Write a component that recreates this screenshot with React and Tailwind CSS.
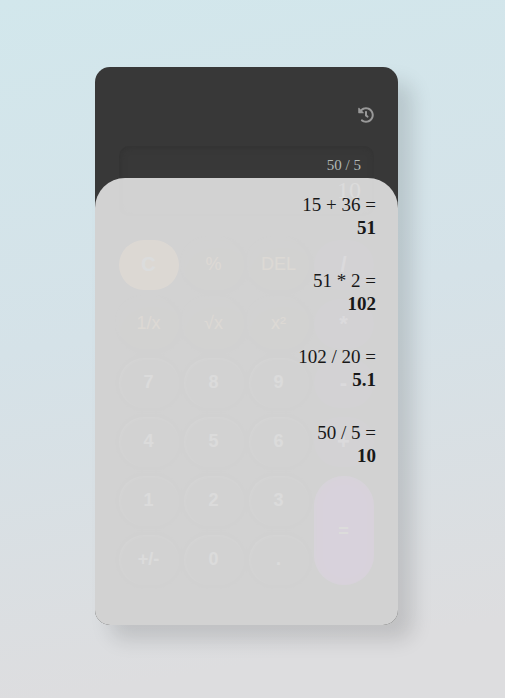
import { FaHistory } from "react-icons/fa";

const tones = {
  clear: "pb-0.5 bg-[#ffb058] text-[#e0f8ff] font-bold text-[20px]",
  fn: "pb-0.5 bg-[#40402c] text-[#ffb868] text-[18px] shadow-[inset_4px_12px_5px_#383838,1px_1px_5px_#282828,-1px_-1px_3px_#4c4c4c]",
  op: "bg-[#4c4064] text-[#e8d0ff] font-bold text-[22px]",
  num: "pb-0.5 bg-[#404040] text-[#e4e4e4] font-bold text-[18px] shadow-[inset_1px_1px_3px_#707070,0_0_4px_#282828]",
  equals: "row-span-2 bg-[#a83cf0] text-[#ffffdd] font-bold text-[18px] shadow-[inset_1px_1px_8px_#a060b0]",
};

const keys = [
  ["C", "clear"], ["%", "fn"], ["DEL", "fn"], ["/", "op"],
  ["1/x", "fn"], ["√x", "fn"], ["x²", "fn"], ["*", "op"],
  ["7", "num"], ["8", "num"], ["9", "num"], ["-", "op"],
  ["4", "num"], ["5", "num"], ["6", "num"], ["+", "op"],
  ["1", "num"], ["2", "num"], ["3", "num"], ["=", "equals"],
  ["+/-", "num"], ["0", "num"], [".", "num"],
];

const history = [
  ["15 + 36", "51"],
  ["51 * 2", "102"],
  ["102 / 20", "5.1"],
  ["50 / 5", "10"],
];

function Key({ label, tone }) {
  return (
    <button className={`flex items-center justify-center rounded-[30px] pr-px leading-none ${tones[tone]}`}>
      {label}
    </button>
  );
}

function HistoryPanel() {
  return (
    <div className="absolute inset-x-0 bottom-0 h-[447px] rounded-t-[30px] rounded-b-[15px] bg-[#dadadaf2] pt-4 pr-[22px] text-right font-['Liberation_Serif',serif] text-[19px] leading-[22px] text-[#181818]">
      {history.map(([expression, result]) => (
        <div key={expression} className="mb-8">
          <p>{expression} =</p>
          <p className="pt-px leading-[21px] font-bold">{result}</p>
        </div>
      ))}
    </div>
  );
}

export default function App() {
  return (
    <main className="flex h-[698px] w-[505px] items-start bg-[linear-gradient(170deg,#d2e7ec,#d5e2e8_45%,#dddddf_90%)] pt-[67px] pl-[95px]">
      <section className="relative flex h-[558px] w-[303px] flex-col rounded-[15px] bg-[#383838] px-6 shadow-[15px_15px_20px_rgba(0,0,0,0.13)]">
        <div className="flex justify-end pt-10">
          <FaHistory className="size-4 text-[#999]" />
        </div>
        <div className="mt-[23px] h-[70px] w-[255px] rounded-[10px] pt-2.5 pr-[13px] text-right font-['Liberation_Serif',serif] shadow-[inset_1px_1px_6px_#323232]">
          <p className="text-[15px] leading-[18px] text-[#b1bab7]">50 / 5</p>
          <p className="mt-[2px] text-[24px] leading-7 text-[#e4e4e4]">10</p>
        </div>
        <div className="mt-6 grid grid-cols-[repeat(4,60px)] grid-rows-[repeat(6,50px)] gap-x-[5px] gap-y-[9px] font-['Liberation_Sans',sans-serif]">
          {keys.map(([label, tone]) => (
            <Key key={label} label={label} tone={tone} />
          ))}
        </div>
        <HistoryPanel />
      </section>
    </main>
  );
}
